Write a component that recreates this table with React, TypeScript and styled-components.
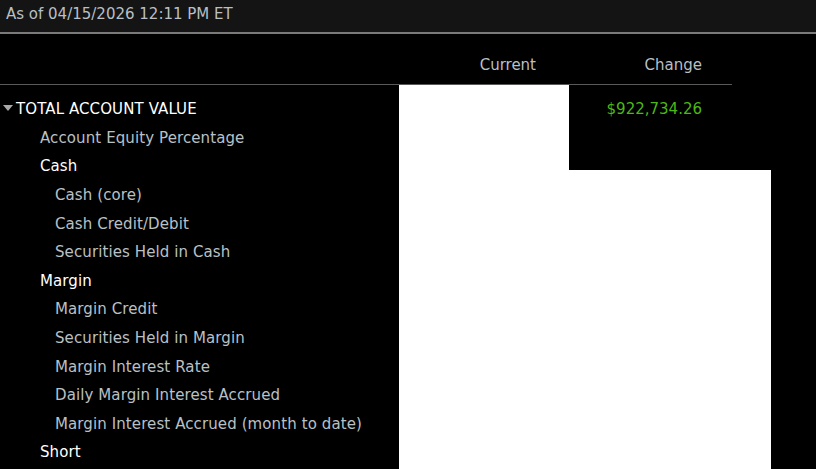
import React from 'react';
import styled, { createGlobalStyle } from 'styled-components';

const GlobalStyle = createGlobalStyle`
  html, body {
    margin: 0;
    padding: 0;
    background: #000;
  }
  body {
    font-family: "DejaVu Sans", Verdana, sans-serif;
  }
`;

type Level = 0 | 1 | 2;

interface RowItem {
  label: string;
  level: Level;
  strong?: boolean;
  expandable?: boolean;
}

const rows: RowItem[] = [
  { label: 'TOTAL ACCOUNT VALUE', level: 0, strong: true, expandable: true },
  { label: 'Account Equity Percentage', level: 1 },
  { label: 'Cash', level: 1, strong: true },
  { label: 'Cash (core)', level: 2 },
  { label: 'Cash Credit/Debit', level: 2 },
  { label: 'Securities Held in Cash', level: 2 },
  { label: 'Margin', level: 1, strong: true },
  { label: 'Margin Credit', level: 2 },
  { label: 'Securities Held in Margin', level: 2 },
  { label: 'Margin Interest Rate', level: 2 },
  { label: 'Daily Margin Interest Accrued', level: 2 },
  { label: 'Margin Interest Accrued (month to date)', level: 2 },
  { label: 'Short', level: 1, strong: true },
];

const indent: Record<Level, number> = { 0: 16, 1: 40, 2: 55 };

const App = () => {
  return (
    <Page>
      <GlobalStyle />
      <TopBar>As of 04/15/2026 12:11 PM ET</TopBar>

      <HeaderRow>
        <LabelHead />
        <ColHead width={170} padRight={33}>Current</ColHead>
        <ColHead width={163} padRight={30}>Change</ColHead>
      </HeaderRow>

      <Body>
        <LabelColumn>
          {rows.map((r) => (
            <Row key={r.label} indent={indent[r.level]} strong={r.strong}>
              {r.expandable && <Caret />}
              {r.label}
            </Row>
          ))}
        </LabelColumn>

        <ValueColumn>
          <ValueTop>
            <BlankCell />
            <ChangeCell>
              <Gain>$922,734.26</Gain>
            </ChangeCell>
          </ValueTop>
          <BlankFill />
        </ValueColumn>
      </Body>
    </Page>
  );
};

export default App;

const Page = styled.div`
  width: 816px;
  height: 100vh;
  overflow: hidden;
  background: #000;
  display: flex;
  flex-direction: column;
`;

const TopBar = styled.div`
  height: 32px;
  flex-shrink: 0;
  background: #141414;
  border-bottom: 2px solid #7a7a7a;
  color: #b9bfc5;
  font-size: 15px;
  line-height: 28px;
  padding-left: 6px;
`;

const HeaderRow = styled.div`
  width: 732px;
  height: 50px;
  flex-shrink: 0;
  display: flex;
  border-bottom: 1px solid #5a5a5a;
`;

const LabelHead = styled.div`
  width: 399px;
`;

const ColHead = styled.div<{ width: number; padRight: number }>`
  width: ${(p) => p.width}px;
  padding-right: ${(p) => p.padRight}px;
  box-sizing: border-box;
  text-align: right;
  color: #b9bfc5;
  font-size: 15px;
  line-height: 62px;
`;

const Body = styled.div`
  flex: 1;
  display: flex;
  min-height: 0;
`;

const LabelColumn = styled.div`
  width: 399px;
  padding-top: 10px;
  display: flex;
  flex-direction: column;
`;

const Row = styled.div<{ indent: number; strong?: boolean }>`
  height: 28.6px;
  flex-shrink: 0;
  display: flex;
  align-items: center;
  padding-left: ${(p) => p.indent}px;
  position: relative;
  font-size: 15px;
  letter-spacing: 0.1px;
  white-space: nowrap;
  color: ${(p) => (p.strong ? '#ffffff' : '#b9c0c6')};
`;

const Caret = styled.span`
  position: absolute;
  left: 3px;
  top: 50%;
  margin-top: -4px;
  width: 0;
  height: 0;
  border-left: 5px solid transparent;
  border-right: 5px solid transparent;
  border-top: 6px solid #a8a8a8;
`;

const ValueColumn = styled.div`
  width: 372px;
  display: flex;
  flex-direction: column;
`;

const ValueTop = styled.div`
  height: 85px;
  display: flex;
`;

const BlankCell = styled.div`
  width: 170px;
  background: #fff;
`;

const ChangeCell = styled.div`
  width: 202px;
  box-sizing: border-box;
  padding: 10px 69px 0 0;
  text-align: right;
`;

const Gain = styled.div`
  height: 28.6px;
  line-height: 28.6px;
  font-size: 15px;
  color: #4cb814;
`;

const BlankFill = styled.div`
  flex: 1;
  background: #fff;
`;
